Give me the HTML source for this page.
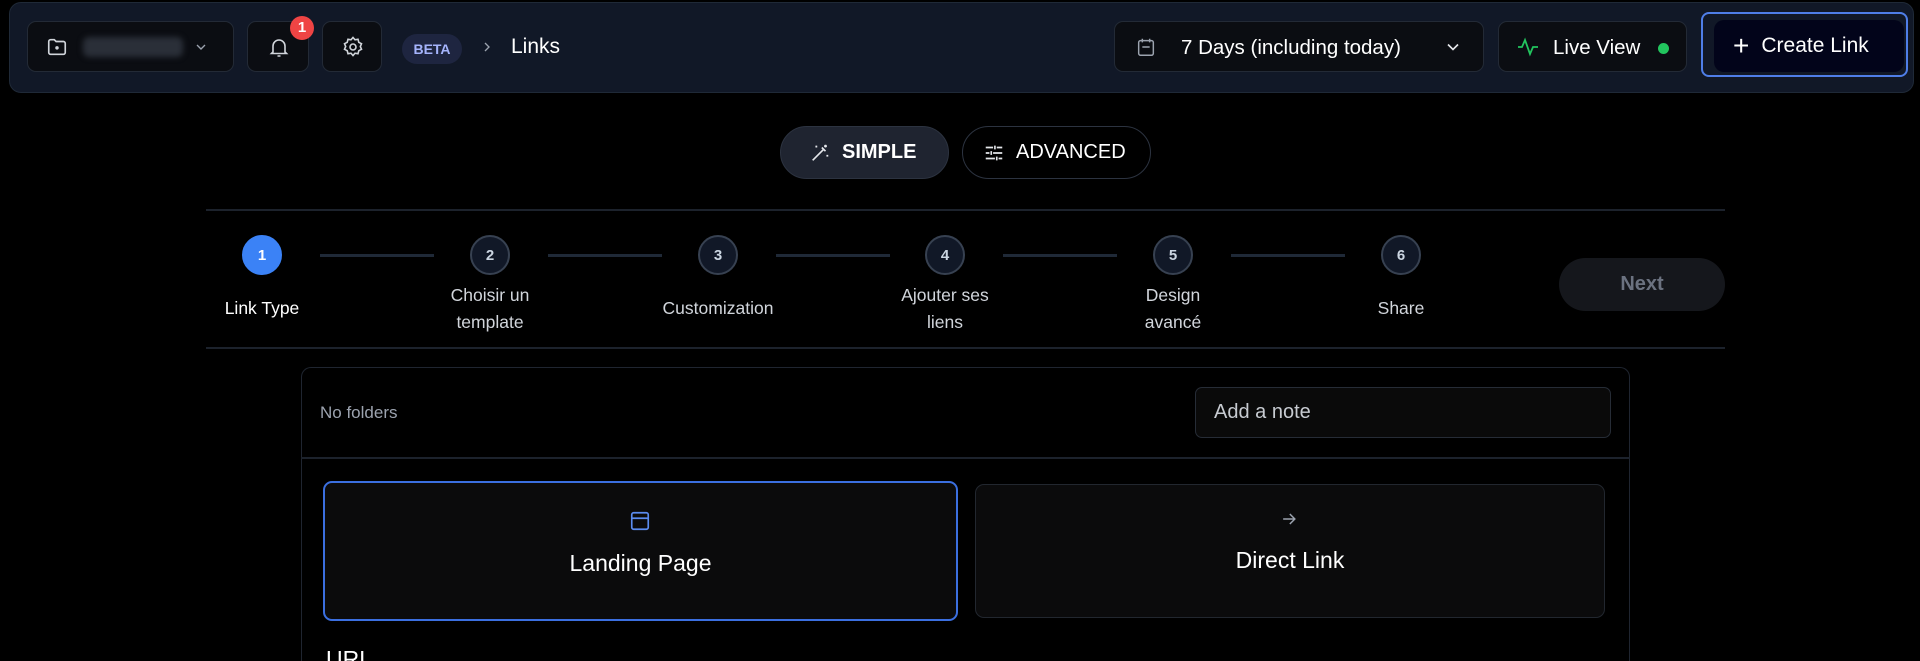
<!DOCTYPE html>
<html style="overflow:hidden;height:661px"><head><style>
*{box-sizing:border-box;margin:0;padding:0}
body{width:1920px;height:661px;background:#000;font-family:"Liberation Sans",sans-serif;color:#fff;position:relative;overflow:hidden}
.a{position:absolute}
.btn{position:absolute;background:#0b0d12;border:1px solid #232a36;border-radius:9px;display:flex;align-items:center}
.circ{position:absolute;width:40px;height:40px;border-radius:50%;background:#111827;border:2px solid #374151;color:#cbd5e1;font-size:15px;font-weight:bold;display:flex;align-items:center;justify-content:center}
.ln{position:absolute;height:3px;background:#1f2937;top:254px;width:114px}
.lbl{position:absolute;width:200px;text-align:center;color:#d1d5db;font-size:17.5px;line-height:27px}
</style></head><body>
<div class="a" style="left:9px;top:2px;width:1905px;height:91px;background:#111827;border:1px solid #1f2937;border-radius:12px"></div>
<div class="btn" style="left:27px;top:21px;width:207px;height:51px">
<svg class="a" style="left:18px;top:14px" width="22" height="22" viewBox="0 0 24 24" fill="none" stroke="#d1d5db" stroke-width="1.8"><path d="M3 6a2 2 0 0 1 2-2h4l2 2h8a2 2 0 0 1 2 2v10a2 2 0 0 1-2 2H5a2 2 0 0 1-2-2z"/><circle cx="12" cy="13" r="1" fill="#d1d5db"/></svg>
<div class="a" style="left:55px;top:15px;width:100px;height:20px;background:#2a2f38;border-radius:6px;filter:blur(3px)"></div>
<svg class="a" style="left:165px;top:17px" width="16" height="16" viewBox="0 0 24 24" fill="none" stroke="#9ca3af" stroke-width="2"><path d="M6 9l6 6 6-6"/></svg></div>
<div class="btn" style="left:247px;top:21px;width:62px;height:51px">
<svg class="a" style="left:19px;top:13px" width="24" height="24" viewBox="0 0 24 24" fill="none" stroke="#d1d5db" stroke-width="1.6"><path d="M6 17V11a6 6 0 0 1 12 0v6l1.5 1.5h-15zM10.5 21h3"/></svg></div>
<div class="a" style="left:290px;top:16px;width:24px;height:24px;border-radius:50%;background:#ef4444;font-size:15px;font-weight:bold;text-align:center;line-height:24px">1</div>
<div class="btn" style="left:322px;top:21px;width:60px;height:51px">
<svg class="a" style="left:18px;top:13px" width="24" height="24" viewBox="0 0 24 24" fill="none" stroke="#d1d5db" stroke-width="1.6"><circle cx="12" cy="12" r="3"/><path d="M12 2.5l2 2.3 3-.5.8 3 2.7 1.4-1.2 2.8 1.2 2.8-2.7 1.4-.8 3-3-.5-2 2.3-2-2.3-3 .5-.8-3-2.7-1.4 1.2-2.8-1.2-2.8 2.7-1.4.8-3 3 .5z"/></svg></div>
<div class="a" style="left:402px;top:34px;width:60px;height:30px;border-radius:15px;background:#1e2540;color:#a5b4fc;font-size:14px;font-weight:bold;text-align:center;line-height:30px">BETA</div>
<svg class="a" style="left:479px;top:39px" width="16" height="16" viewBox="0 0 24 24" fill="none" stroke="#9ca3af" stroke-width="2"><path d="M9 6l6 6-6 6"/></svg>
<div class="a" style="left:511px;top:35px;font-size:21px">Links</div>
<div class="btn" style="left:1114px;top:21px;width:370px;height:51px">
<svg class="a" style="left:20px;top:14px" width="22" height="22" viewBox="0 0 24 24" fill="none" stroke="#9ca3af" stroke-width="1.6"><rect x="4" y="5" width="16" height="16" rx="2"/><path d="M8 3v4M16 3v4M8 12h8"/></svg>
<div class="a" style="left:66px;top:14px;font-size:20.5px">7 Days (including today)</div>
<svg class="a" style="left:328px;top:15px" width="20" height="20" viewBox="0 0 24 24" fill="none" stroke="#e5e7eb" stroke-width="2"><path d="M6 9l6 6 6-6"/></svg></div>
<div class="btn" style="left:1498px;top:21px;width:189px;height:51px">
<svg class="a" style="left:17px;top:13px" width="24" height="24" viewBox="0 0 24 24" fill="none" stroke="#22c55e" stroke-width="1.8"><path d="M2 12h4l3-7 5 14 3-7h5"/></svg>
<div class="a" style="left:54px;top:14px;font-size:20.5px">Live View</div>
<div class="a" style="left:159px;top:21px;width:11px;height:11px;border-radius:50%;background:#22c55e"></div></div>
<div class="a" style="left:1701px;top:12px;width:207px;height:65px;border:2px solid #4f7ee8;border-radius:8px;background:#111827"></div>
<div class="a" style="left:1714px;top:20px;width:190px;height:52px;border-radius:10px;background:#02041a;display:flex;align-items:center;font-size:21px"><span style="font-size:28px;margin:0 12px 0 19px;font-weight:300">+</span>Create Link</div>
<div class="a" style="left:780px;top:126px;width:169px;height:53px;border-radius:27px;background:#1f2430;border:1px solid #2c3340;display:flex;align-items:center;font-size:20px;font-weight:bold">
<svg style="margin:0 11px 0 28px" width="22" height="22" viewBox="0 0 24 24" fill="none" stroke="#e5e7eb" stroke-width="1.8"><path d="M4 20L16 8M14 6l4 4M18 3v3M19.5 4.5h-3M8 4v2M9 5H7M20 14v2M21 15h-2"/></svg>SIMPLE</div>
<div class="a" style="left:962px;top:126px;width:189px;height:53px;border-radius:27px;background:#000;border:1px solid #2c3340;display:flex;align-items:center;font-size:20px">
<svg style="margin:0 11px 0 20px" width="22" height="22" viewBox="0 0 24 24" fill="none" stroke="#e5e7eb" stroke-width="1.8"><path d="M3 6h8M15 6h6M13 4v4M3 12h4M11 12h10M9 10v4M3 18h10M17 18h4M15 16v4"/></svg>ADVANCED</div>
<div class="a" style="left:206px;top:209px;width:1519px;height:2px;background:#1c222c"></div>
<div class="a" style="left:206px;top:347px;width:1519px;height:2px;background:#1c222c"></div>
<div class="circ" style="left:242px;top:235px;background:#3b82f6;border-color:#3b82f6;color:#fff">1</div>
<div class="circ" style="left:470px;top:235px">2</div>
<div class="circ" style="left:698px;top:235px">3</div>
<div class="circ" style="left:925px;top:235px">4</div>
<div class="circ" style="left:1153px;top:235px">5</div>
<div class="circ" style="left:1381px;top:235px">6</div>
<div class="ln" style="left:320px"></div><div class="ln" style="left:548px"></div><div class="ln" style="left:776px"></div><div class="ln" style="left:1003px"></div><div class="ln" style="left:1231px"></div>
<div class="lbl" style="left:162px;top:295px;color:#fff">Link Type</div>
<div class="lbl" style="left:390px;top:282px">Choisir un<br>template</div>
<div class="lbl" style="left:618px;top:295px">Customization</div>
<div class="lbl" style="left:845px;top:282px">Ajouter ses<br>liens</div>
<div class="lbl" style="left:1073px;top:282px">Design<br>avancé</div>
<div class="lbl" style="left:1301px;top:295px">Share</div>
<div class="a" style="left:1559px;top:258px;width:166px;height:53px;border-radius:27px;background:#15171c;color:#6b7280;font-size:20px;font-weight:bold;text-align:center;line-height:53px">Next</div>
<div class="a" style="left:301px;top:367px;width:1329px;height:294px;border:1px solid #1f2530;border-bottom:none;border-radius:10px 10px 0 0"></div>
<div class="a" style="left:320px;top:403px;color:#9ca3af;font-size:17px">No folders</div>
<div class="a" style="left:1195px;top:387px;width:416px;height:51px;border:1px solid #262c36;border-radius:7px;background:#0a0a0a;color:#c7cbd1;font-size:20px;padding:13px 18px">Add a note</div>
<div class="a" style="left:301px;top:457px;width:1329px;height:2px;background:#1c222c"></div>
<div class="a" style="left:323px;top:481px;width:635px;height:140px;border:2px solid #3b6fe0;border-radius:9px;background:#0b0b0c"></div>
<svg class="a" style="left:629px;top:510px" width="22" height="22" viewBox="0 0 24 24" fill="none" stroke="#5b8cf0" stroke-width="1.8"><rect x="3" y="3" width="18" height="18" rx="2"/><path d="M3 9h18"/></svg>
<div class="a" style="left:323px;top:550px;width:635px;text-align:center;font-size:23px">Landing Page</div>
<div class="a" style="left:975px;top:484px;width:630px;height:134px;border:1px solid #22272f;border-radius:9px;background:#0b0b0c"></div>
<svg class="a" style="left:1279px;top:509px" width="20" height="20" viewBox="0 0 24 24" fill="none" stroke="#9ca3af" stroke-width="1.8"><path d="M5 12h14M13 6l6 6-6 6"/></svg>
<div class="a" style="left:975px;top:547px;width:630px;text-align:center;font-size:23px">Direct Link</div>
<div class="a" style="left:326px;top:646px;font-size:23px;line-height:15px;height:15px;overflow:hidden;padding-top:0"><span style="display:inline-block;line-height:26px">URL</span></div>
</body></html>
